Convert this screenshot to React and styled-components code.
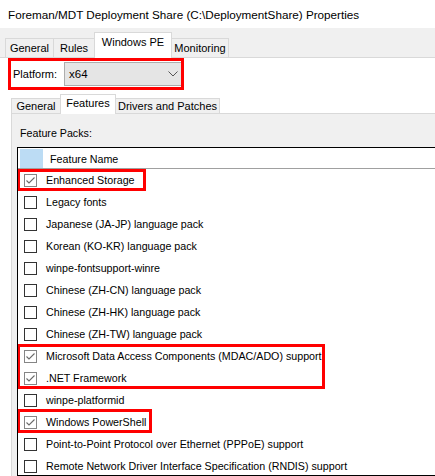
import React from 'react';
import styled, { createGlobalStyle } from 'styled-components';

const Global = createGlobalStyle`
  html, body { margin: 0; padding: 0; background: #fff; }
  body {
    font-family: "Liberation Sans", Arial, sans-serif;
    font-size: 11px;
    color: #000;
    overflow: hidden;
  }
`;

const Window = styled.div`
  width: 435px;
  height: 476px;
  overflow: hidden;
  display: flex;
  flex-direction: column;
  background: #fff;
`;

const TitleBar = styled.div`
  flex: none;
  height: 28px;
  display: flex;
  align-items: center;
  padding-left: 8px;
  font-size: 11.7px;
  background: #fff;
`;

const Dialog = styled.div`
  flex: 1;
  min-height: 0;
  background: #f0f0f0;
  display: flex;
  flex-direction: column;
`;

const TabStrip = styled.div`
  flex: none;
  display: flex;
  align-items: flex-end;
  height: ${p => p.$h}px;
  padding-left: ${p => p.$pl}px;
  border-bottom: 1px solid #d9d9d9;
  background: ${p => p.$bg};
`;

const Tab = styled.div`
  box-sizing: border-box;
  width: ${p => p.$w}px;
  height: ${p => (p.$selected ? p.$h + 5 : p.$h)}px;
  margin-right: -1px;
  margin-bottom: ${p => (p.$selected ? -1 : 0)}px;
  border: 1px solid #d9d9d9;
  border-bottom: none;
  background: ${p => (p.$selected ? '#fff' : '#f0f0f0')};
  position: relative;
  z-index: ${p => (p.$selected ? 1 : 0)};
  display: flex;
  align-items: ${p => (p.$selected ? 'flex-start' : 'center')};
  padding-top: ${p => (p.$selected ? p.$pt : 0)}px;
  justify-content: center;
  white-space: nowrap;
`;

const OuterPage = styled.div`
  flex: 1;
  min-height: 0;
  background: #fff;
  padding-left: 8px;
  display: flex;
  flex-direction: column;
`;

const Highlight = styled.div`
  position: relative;
  width: fit-content;
  padding-right: ${p => p.$pr || 0}px;
  &::after {
    content: '';
    position: absolute;
    left: ${p => p.$left || 0}px;
    top: ${p => p.$top || 0}px;
    right: 0;
    bottom: ${p => p.$bottom || 0}px;
    border: 3px solid #ff0000;
    pointer-events: none;
  }
`;

const PlatformRow = styled.div`
  box-sizing: border-box;
  width: 176px;
  height: 32px;
  display: flex;
  align-items: center;
  padding-left: 5px;
`;

const Label = styled.span`
  width: 51px;
  flex: none;
`;

const Select = styled.div`
  box-sizing: border-box;
  width: 118px;
  height: 24px;
  margin-right: -2px;
  background: #e5e5e5;
  border: 1px solid #adadad;
  display: flex;
  align-items: center;
  justify-content: space-between;
  padding: 0 3px 0 4px;
  font-size: 11.5px;
`;

const InnerTabs = styled.div`
  flex: 1;
  min-height: 0;
  margin-top: 3px;
  margin-left: 3px;
  display: flex;
  flex-direction: column;
`;

const InnerPage = styled.div`
  flex: 1;
  min-height: 0;
  background: #f0f0f0;
  border-left: 1px solid #d9d9d9;
  padding-left: 5px;
  display: flex;
  flex-direction: column;
`;

const GroupLabel = styled.div`
  margin-top: 13px;
  margin-left: 3px;
  height: 13px;
  line-height: 13px;
  font-size: 10.7px;
`;

const List = styled.div`
  box-sizing: border-box;
  margin-top: 7px;
  width: 440px;
  height: 329px;
  flex: none;
  background: #fff;
  border: 1px solid #000;
  overflow: hidden;
  font-size: 10.7px;
`;

const Header = styled.div`
  height: 20px;
  border-bottom: 1px solid #a0a0a0;
  display: flex;
  align-items: flex-end;
  padding-left: 2px;
`;

const HeaderCell = styled.div`
  width: 23px;
  height: 19px;
  background: #bcdcf4;
`;

const HeaderText = styled.div`
  height: 19px;
  display: flex;
  align-items: center;
  padding-left: 7px;
`;

const Row = styled.div`
  height: 22px;
  display: flex;
  align-items: center;
  padding-left: 6px;
  white-space: nowrap;
`;

const Box = styled.div`
  box-sizing: border-box;
  width: 13px;
  height: 13px;
  flex: none;
  border: 1px solid ${p => (p.$checked ? '#858585' : '#333')};
  background: #fff;
  margin-right: 9px;
  display: flex;
  align-items: center;
  justify-content: center;
`;

const Check = () => (
  <svg width="11" height="11" viewBox="0 0 11 11">
    <polyline points="1.5,5.5 4,8 9.5,2.5" fill="none" stroke="#6a6a6a" strokeWidth="1.1" />
  </svg>
);

const Chevron = () => (
  <svg width="10" height="6" viewBox="0 0 10 6">
    <polyline points="0.5,0.5 5,5 9.5,0.5" fill="none" stroke="#555" strokeWidth="1" />
  </svg>
);

const Item = ({ checked, children }) => (
  <Row>
    <Box $checked={checked}>{checked && <Check />}</Box>
    {children}
  </Row>
);

export default function App() {
  return (
    <Window>
      <Global />
      <TitleBar>Foreman/MDT Deployment Share (C:\DeploymentShare) Properties</TitleBar>
      <Dialog>
        <TabStrip $h={29} $pl={5} $bg="#f0f0f0">
          <Tab $w={49} $h={19}>General</Tab>
          <Tab $w={42} $h={19}>Rules</Tab>
          <Tab $w={78} $h={21} $selected $pt={3}>Windows PE</Tab>
          <Tab $w={58} $h={19}>Monitoring</Tab>
        </TabStrip>
        <OuterPage>
          <Highlight>
            <PlatformRow>
              <Label>Platform:</Label>
              <Select>
                <span>x64</span>
                <Chevron />
              </Select>
            </PlatformRow>
          </Highlight>
          <InnerTabs>
            <TabStrip $h={20} $pl={0} $bg="#fff">
              <Tab $w={50} $h={15}>General</Tab>
              <Tab $w={56} $h={15} $selected $pt={2}>Features</Tab>
              <Tab $w={105} $h={15}>Drivers and Patches</Tab>
            </TabStrip>
            <InnerPage>
              <GroupLabel>Feature Packs:</GroupLabel>
              <List>
                <Header>
                  <HeaderCell />
                  <HeaderText>Feature Name</HeaderText>
                </Header>
                <Highlight $left={-1} $pr={11}>
                  <Item checked>Enhanced Storage</Item>
                </Highlight>
                <Item>Legacy fonts</Item>
                <Item>Japanese (JA-JP) language pack</Item>
                <Item>Korean (KO-KR) language pack</Item>
                <Item>winpe-fontsupport-winre</Item>
                <Item>Chinese (ZH-CN) language pack</Item>
                <Item>Chinese (ZH-HK) language pack</Item>
                <Item>Chinese (ZH-TW) language pack</Item>
                <Highlight $left={-1} $pr={3} $top={-1}>
                  <Item checked>Microsoft Data Access Components (MDAC/ADO) support</Item>
                  <Item checked>.NET Framework</Item>
                </Highlight>
                <Item>winpe-platformid</Item>
                <Highlight $left={-1} $pr={6} $top={-2}>
                  <Item checked>Windows PowerShell</Item>
                </Highlight>
                <Item>Point-to-Point Protocol over Ethernet (PPPoE) support</Item>
                <Item>Remote Network Driver Interface Specification (RNDIS) support</Item>
              </List>
            </InnerPage>
          </InnerTabs>
        </OuterPage>
      </Dialog>
    </Window>
  );
}
